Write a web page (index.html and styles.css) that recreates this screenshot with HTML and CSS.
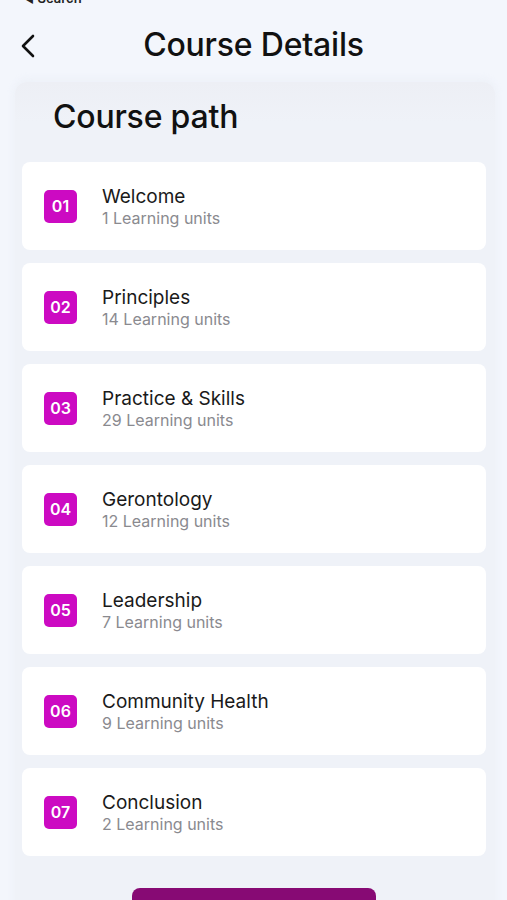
FILE: index.html
```html
<!DOCTYPE html>
<html>
<head>
<meta charset="utf-8">
<link rel="stylesheet" href="styles.css">
</head>
<body>
<div class="status">&#9664; Search</div>
<header class="topbar">
  <button class="back" aria-label="Back">
    <svg width="16" height="24" viewBox="0 0 16 24"><path d="M13 2 L3 12 L13 22" fill="none" stroke="#111" stroke-width="2.6" stroke-linecap="round" stroke-linejoin="round"/></svg>
  </button>
  <h1 class="title">Course Details</h1>
</header>
<main class="panel">
  <h2 class="section-title">Course path</h2>
  <ul class="modules">
    <li class="module"><span class="badge">01</span><div class="info"><div class="name">Welcome</div><div class="units">1 Learning units</div></div></li>
    <li class="module"><span class="badge">02</span><div class="info"><div class="name">Principles</div><div class="units">14 Learning units</div></div></li>
    <li class="module"><span class="badge">03</span><div class="info"><div class="name">Practice &amp; Skills</div><div class="units">29 Learning units</div></div></li>
    <li class="module"><span class="badge">04</span><div class="info"><div class="name">Gerontology</div><div class="units">12 Learning units</div></div></li>
    <li class="module"><span class="badge">05</span><div class="info"><div class="name">Leadership</div><div class="units">7 Learning units</div></div></li>
    <li class="module"><span class="badge">06</span><div class="info"><div class="name">Community Health</div><div class="units">9 Learning units</div></div></li>
    <li class="module"><span class="badge">07</span><div class="info"><div class="name">Conclusion</div><div class="units">2 Learning units</div></div></li>
  </ul>
  <div class="actions"><button class="cta">Start course</button></div>
</main>
</body>
</html>
```
FILE: styles.css
```css
* { box-sizing: border-box; }
html, body { margin: 0; padding: 0; }
body {
  background: #f3f6fc;
  font-family: Inter, "Noto Sans", sans-serif;
  color: #111;
  width: 507px;
  height: 900px;
  overflow: hidden;
}
.status {
  font-size: 13px;
  font-weight: 600;
  line-height: 14px;
  margin-top: -9px;
  padding-left: 22px;
  color: #222;
  height: 5px;
}
.topbar {
  height: 86px;
  display: flex;
  align-items: center;
  justify-content: center;
  position: relative;
}
.back {
  position: absolute;
  left: 16px;
  top: 36px;
  background: none;
  border: 0;
  padding: 0;
  width: 24px;
  height: 28px;
  display: flex;
  align-items: center;
  justify-content: center;
}
.title {
  margin: 0;
  font-size: 32px;
  font-weight: 500;
  letter-spacing: -0.2px;
  padding-top: 10px;
}
.panel {
  margin: 0 12px 0 15px;
  padding: 0 9px 0 7px;
  background: linear-gradient(#edeff5, #eff2f8 40px, #eff2f8);
  border-radius: 12px 12px 0 0;
  box-shadow: 0 -2px 8px rgba(226, 230, 240, 0.4);
  min-height: 830px;
}
.section-title {
  margin: 0;
  padding: 15px 0 0 31px;
  height: 80px;
  font-size: 32px;
  font-weight: 500;
  letter-spacing: -0.2px;
}
.modules {
  list-style: none;
  margin: 0;
  padding: 0;
  display: flex;
  flex-direction: column;
  gap: 13px;
}
.module {
  background: #fff;
  height: 88px;
  border-radius: 8px;
  display: flex;
  align-items: center;
  padding-left: 22px;
  gap: 25px;
}
.badge {
  width: 33px;
  height: 33px;
  border-radius: 5px;
  background: #cc0ac2;
  color: #fff;
  font-weight: 600;
  font-size: 16px;
  display: flex;
  align-items: center;
  justify-content: center;
  flex: none;
}
.info { display: flex; flex-direction: column; padding-top: 1px; }
.name {
  font-size: 19px;
  line-height: 23px;
  color: #1a1a1a;
}
.units {
  font-size: 16px;
  line-height: 20px;
  color: #8a8a8f;
}
.actions {
  display: flex;
  justify-content: center;
  padding-top: 32px;
}
.cta {
  width: 244px;
  height: 50px;
  border: 0;
  border-radius: 8px;
  background: #870a74;
  color: #fff;
  font-family: inherit;
  font-size: 17px;
  font-weight: 600;
}
```
